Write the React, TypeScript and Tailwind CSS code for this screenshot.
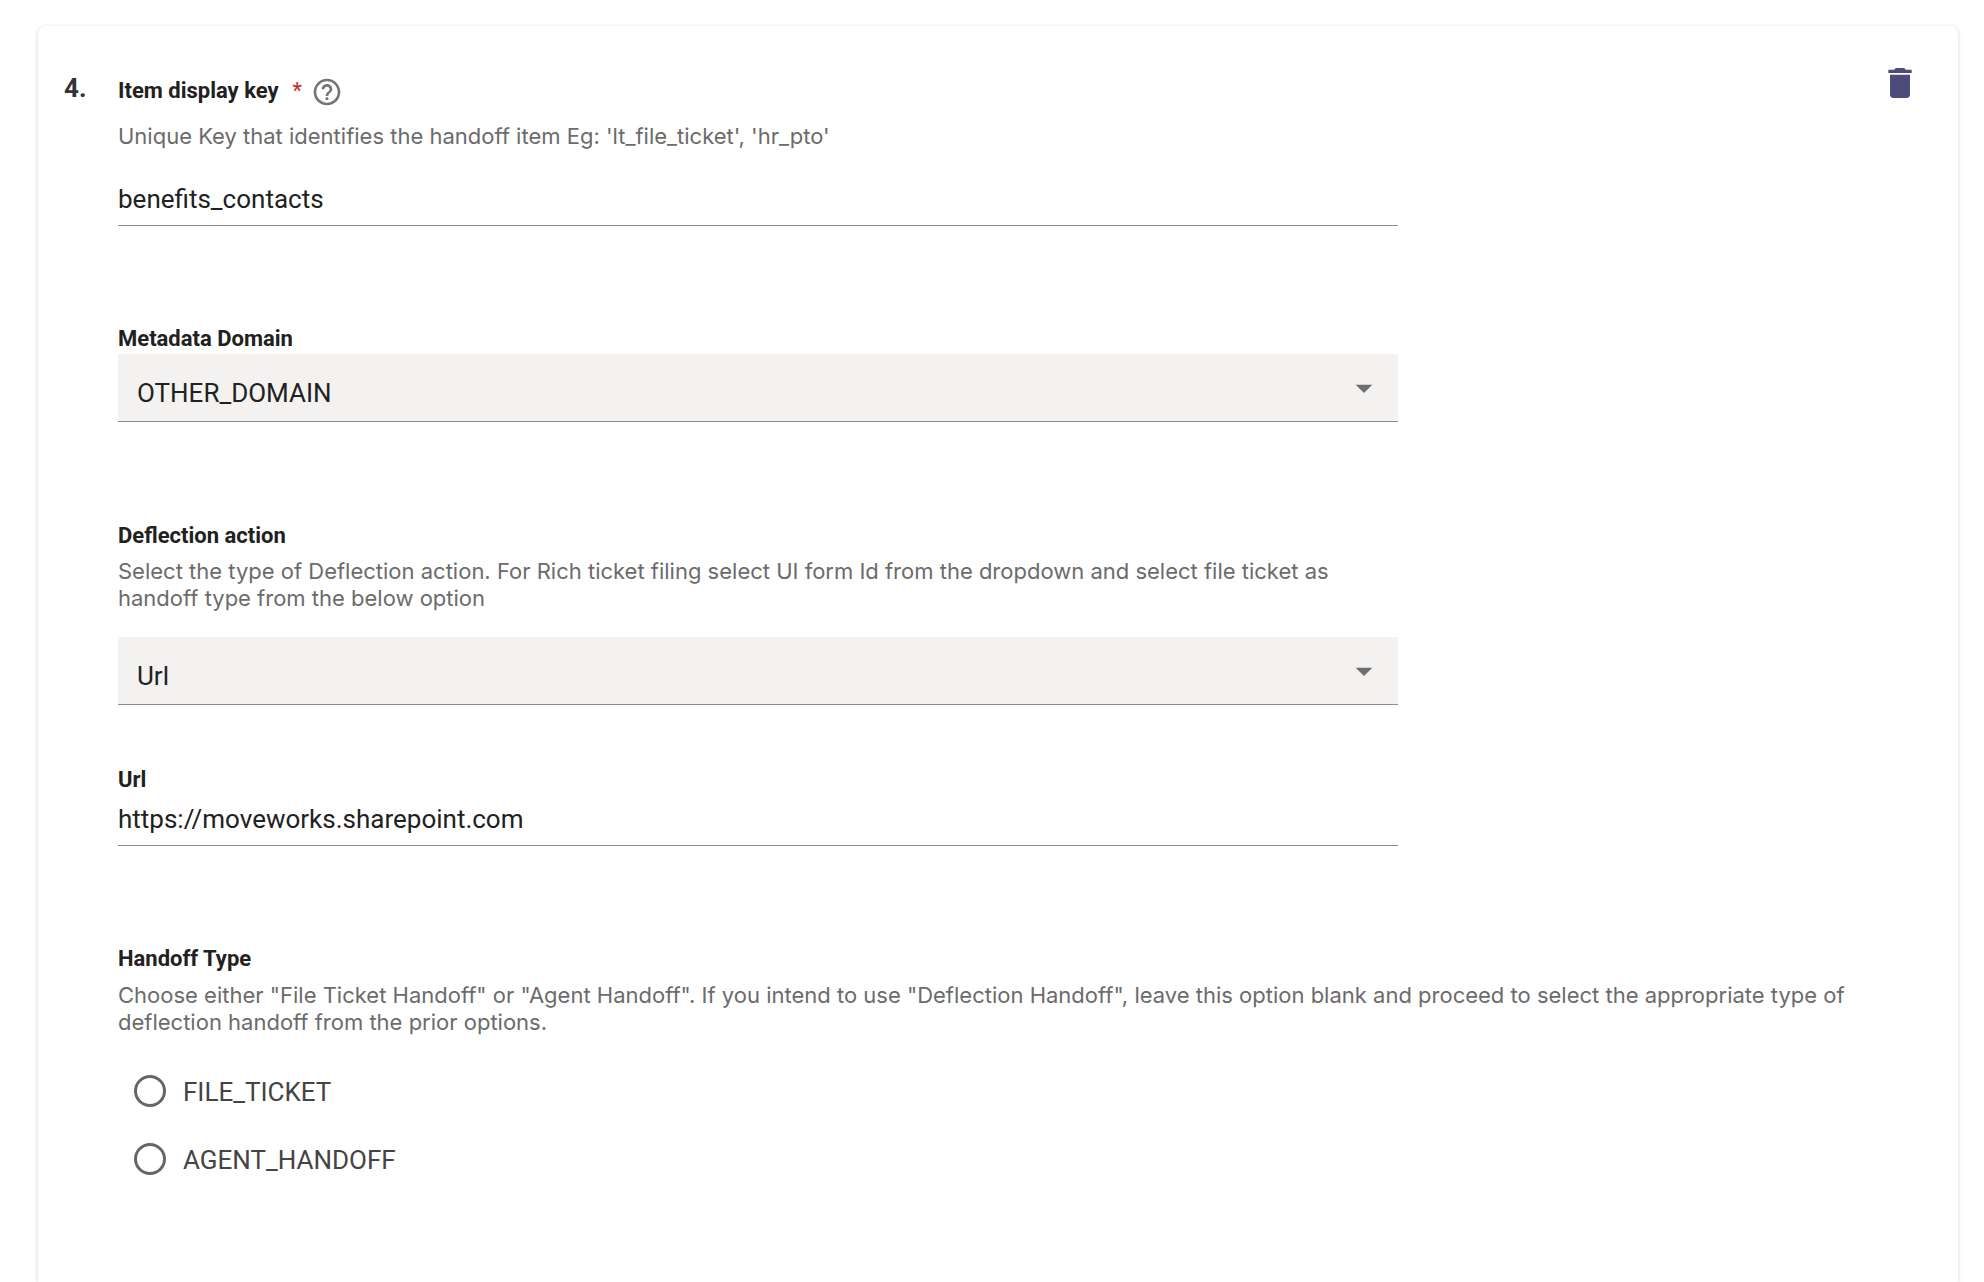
import { useState } from "react";
import type { ReactNode } from "react";
import { MdArrowDropDown, MdDelete, MdHelpOutline } from "react-icons/md";

const labelClass = "block text-[22px] leading-7 font-bold text-[#212121]";
const inputClass =
  "block w-full border-b border-[#8c8c8c] bg-transparent pt-2 pb-[10px] text-[26px] leading-8 text-[#212121] outline-none";

function HelpText({ id, children }: { id: string; children: ReactNode }) {
  return (
    <p
      id={id}
      className="font-['Inter',sans-serif] text-[22px] leading-[27px] text-[#6b6b6b]"
    >
      {children}
    </p>
  );
}

interface SelectFieldProps {
  id: string;
  value: string;
  options: string[];
  onChange: (value: string) => void;
}

function SelectField({ id, value, options, onChange }: SelectFieldProps) {
  return (
    <div className="relative">
      <select
        id={id}
        value={value}
        onChange={(e) => onChange(e.target.value)}
        className="block w-full appearance-none border-b border-[#8c8c8c] bg-[#f3f2f0] pt-[23px] pb-3 pl-[19px] pr-16 text-[26px] leading-8 text-[#212121] outline-none"
      >
        {options.map((option) => (
          <option key={option}>{option}</option>
        ))}
      </select>
      <MdArrowDropDown className="pointer-events-none absolute right-[14px] top-[14px] h-10 w-10 text-[#6f6f6f]" />
    </div>
  );
}

export default function App() {
  const [itemKey, setItemKey] = useState("benefits_contacts");
  const [domain, setDomain] = useState("OTHER_DOMAIN");
  const [action, setAction] = useState("Url");
  const [url, setUrl] = useState("https://moveworks.sharepoint.com");
  const [handoffType, setHandoffType] = useState("");

  return (
    <main className="flex min-h-screen flex-col bg-white pt-[26px] pr-[26px] pl-[38px] font-['Roboto',sans-serif]">
      <section className="flex flex-1 items-start rounded-t-lg bg-white pt-12 pr-[38px] pb-20 pl-[26px] shadow-[0_1px_4px_rgba(0,0,0,0.18)]">
        <span className="w-[54px] shrink-0 text-[26px] leading-7 font-bold text-[#333333]">
          4.
        </span>

        <form className="min-w-0 flex-1">
          {/* Item display key */}
          <div className="w-full max-w-[1280px]">
            <div className="flex items-end">
              <label htmlFor="item-key" className={`${labelClass} pb-[3px]`}>
                Item display key
              </label>
              <span className="ml-[14px] pb-[3px] text-[22px] leading-7 text-[#c62828]">*</span>
              <button type="button" aria-label="Help" className="ml-[9px] pt-[2px]">
                <MdHelpOutline className="h-8 w-8 text-[#757575]" />
              </button>
            </div>
            <div className="mt-[15px] mb-[25px]">
              <HelpText id="item-key-help">
                Unique Key that identifies the handoff item Eg: 'lt_file_ticket', 'hr_pto'
              </HelpText>
            </div>
            <input
              id="item-key"
              type="text"
              aria-describedby="item-key-help"
              value={itemKey}
              onChange={(e) => setItemKey(e.target.value)}
              className={inputClass}
            />
          </div>

          {/* Metadata Domain */}
          <div className="mt-[99px] w-full max-w-[1280px]">
            <label htmlFor="domain" className={`${labelClass} mb-px`}>
              Metadata Domain
            </label>
            <SelectField
              id="domain"
              value={domain}
              options={["OTHER_DOMAIN", "IT_DOMAIN", "HR_DOMAIN"]}
              onChange={setDomain}
            />
          </div>

          {/* Deflection action */}
          <div className="mt-[100px] w-full max-w-[1280px]">
            <label htmlFor="action" className={labelClass}>
              Deflection action
            </label>
            <div className="mt-2 mb-[25px]">
              <HelpText id="action-help">
                Select the type of Deflection action. For Rich ticket filing select UI form Id from
                the dropdown and select file ticket as handoff type from the below option
              </HelpText>
            </div>
            <SelectField
              id="action"
              value={action}
              options={["Url", "UI form Id"]}
              onChange={setAction}
            />
          </div>

          {/* Url */}
          <div className="mt-[61px] w-full max-w-[1280px]">
            <label htmlFor="url" className={`${labelClass} mb-px`}>
              Url
            </label>
            <input
              id="url"
              type="text"
              value={url}
              onChange={(e) => setUrl(e.target.value)}
              className={inputClass}
            />
          </div>

          {/* Handoff Type */}
          <fieldset className="mt-[99px]" aria-describedby="handoff-help">
            <legend className={labelClass}>Handoff Type</legend>
            <div className="mt-[9px] mb-[39px] pr-16">
              <HelpText id="handoff-help">
                Choose either "File Ticket Handoff" or "Agent Handoff". If you intend to use
                "Deflection Handoff", leave this option blank and proceed to select the appropriate
                type of deflection handoff from the prior options.
              </HelpText>
            </div>
            <div className="flex flex-col items-start gap-9 pl-4">
              {["FILE_TICKET", "AGENT_HANDOFF"].map((type) => (
                <label
                  key={type}
                  className="flex h-8 items-center gap-[17px] text-[26px] leading-8 text-[#444444]"
                >
                  <input
                    type="radio"
                    name="handoff-type"
                    value={type}
                    checked={handoffType === type}
                    onChange={() => setHandoffType(type)}
                    className="h-8 w-8 appearance-none rounded-full border-3 border-[#666666] checked:border-[10px]"
                  />
                  <span className="pt-[2px]">{type}</span>
                </label>
              ))}
            </div>
          </fieldset>
        </form>

        <button type="button" aria-label="Delete item" className="-mt-[11px] -ml-10 shrink-0">
          <MdDelete className="h-10 w-10 text-[#4d4b7a]" />
        </button>
      </section>
    </main>
  );
}
